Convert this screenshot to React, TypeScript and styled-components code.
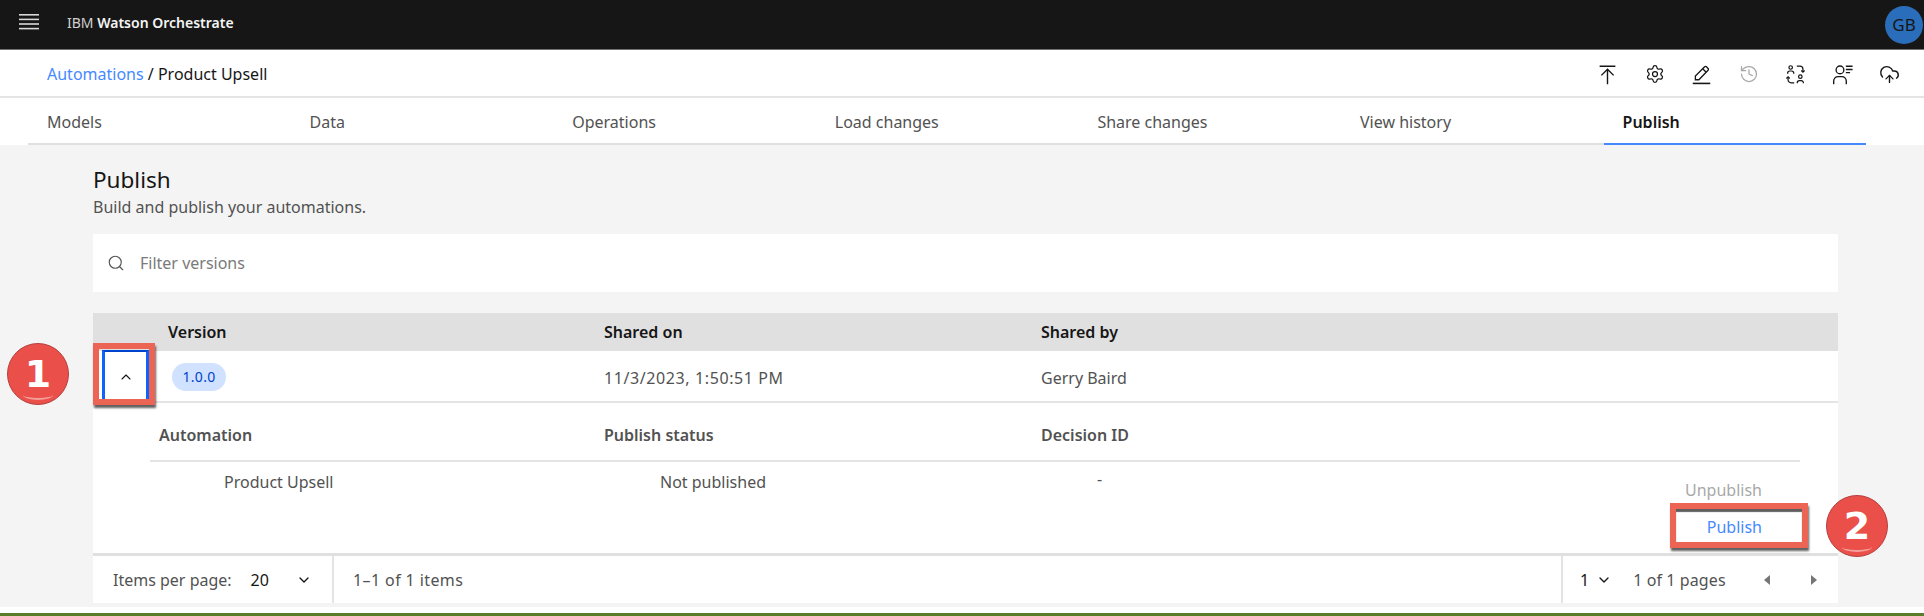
import React from 'react';
import styled, { createGlobalStyle } from 'styled-components';
import { ChevronDown, ChevronUp, CloudUpload, History, Search, Settings } from 'lucide-react';

const GlobalStyle = createGlobalStyle`
  html, body {
    margin: 0;
    padding: 0;
    background: #f4f4f4;
    overflow: hidden;
  }
  * { box-sizing: border-box; }
  body {
    font-family: 'Noto Sans', 'Liberation Sans', sans-serif;
    font-size: 16px;
    color: #161616;
  }
`;

const Page = styled.div`
  position: relative;
  width: 1924px;
  height: 616px;
  display: flex;
  flex-direction: column;
  overflow: hidden;
  border-bottom: 3px solid #5a7d2a;
`;

const TopBar = styled.header`
  height: 50px;
  flex: none;
  display: flex;
  align-items: center;
  background: #161616;
  border-bottom: 1px solid #6f6f6f;
  color: #f4f4f4;
  padding: 0 1px 5px 19px;
`;

const Brand = styled.div`
  margin-left: 28px;
  font-size: 14px;
  color: #d0d0d0;
  b { color: #f4f4f4; font-weight: 600; }
`;

const Avatar = styled.div`
  margin-left: auto;
  margin-top: 5px;
  width: 38px;
  height: 38px;
  border-radius: 50%;
  background: #2a6ebb;
  color: #161616;
  display: flex;
  align-items: center;
  justify-content: center;
  font-size: 17px;
`;

const Crumbs = styled.div`
  height: 48px;
  flex: none;
  background: #fff;
  border-bottom: 2px solid #e4e4e4;
  display: flex;
  align-items: center;
  padding: 2px 24px 0 47px;
`;

const CrumbText = styled.div`
  a { color: #4589ff; text-decoration: none; }
`;

const IconBar = styled.div`
  margin-left: auto;
  display: flex;
  gap: 26px;
`;

const ToolIcon = styled.span<{ $muted?: boolean }>`
  width: 21px;
  height: 21px;
  display: flex;
  align-items: center;
  justify-content: center;
  color: ${(p) => (p.$muted ? '#a8a8a8' : '#161616')};
`;

const Tabs = styled.nav`
  height: 47px;
  flex: none;
  background: #fff;
  display: flex;
  padding-left: 28px;
`;

const Tab = styled.div<{ $active?: boolean }>`
  width: 262.6px;
  padding: 13px 0 0 19px;
  color: ${(p) => (p.$active ? '#161616' : '#525252')};
  font-weight: ${(p) => (p.$active ? 600 : 400)};
  border-bottom: 2px solid ${(p) => (p.$active ? '#4589ff' : '#e0e0e0')};
`;

const Main = styled.main`
  flex: 1;
  padding: 22px 86px 0 93px;
`;

const Title = styled.h1`
  margin: 0;
  font-size: 22.5px;
  font-weight: 400;
  line-height: 26px;
`;

const Subtitle = styled.p`
  margin: 4px 0 0;
  line-height: 20px;
  color: #525252;
`;

const FilterBox = styled.div`
  margin-top: 17px;
  height: 58px;
  background: #fff;
  display: flex;
  align-items: center;
  gap: 15px;
  padding-left: 14px;
  color: #7a7a7a;
`;

const Table = styled.section`
  margin-top: 21px;
`;

const HeadRow = styled.div`
  height: 38px;
  display: grid;
  grid-template-columns: 75px 436px 437px 1fr;
  align-items: center;
  background: #e0e0e0;
  font-weight: 600;
`;

const VersionRow = styled.div`
  height: 52px;
  display: grid;
  grid-template-columns: 75px 436px 437px 1fr;
  align-items: center;
  background: #fff;
  border-bottom: 2px solid #e4e4e4;
  color: #525252;
`;

const VersionText = styled.span<{ $spacing?: number }>`
  padding-top: 2px;
  letter-spacing: ${(p) => p.$spacing ?? 0}px;
`;

const ExpandButton = styled.button`
  width: 47px;
  height: 52px;
  margin: -1px 0 0 9px;
  padding: 0;
  background: #fff;
  color: #161616;
  border: 0;
  border-top: 2px solid #0043ce;
  border-left: 3px solid #0f62fe;
  border-right: 3px solid #0f62fe;
  display: flex;
  align-items: center;
  justify-content: center;
`;

const Tag = styled.span`
  display: inline-flex;
  align-items: center;
  justify-content: center;
  width: 54px;
  height: 28px;
  margin-left: 4px;
  border-radius: 14px;
  background: #d0e2ff;
  color: #0043ce;
  font-size: 14px;
  letter-spacing: 0.3px;
`;

const Expanded = styled.div`
  height: 153px;
  background: #fff;
  padding: 0 38px 0 57px;
  border-bottom: 3px solid #e0e0e0;
`;

const SubHead = styled.div`
  height: 59px;
  display: grid;
  grid-template-columns: 454px 437px 1fr;
  align-items: center;
  border-bottom: 2px solid #e4e4e4;
  color: #525252;
  font-weight: 600;
  padding-top: 6px;
`;

const SubHeadCell = styled.div<{ $indent?: number }>`
  padding-left: ${(p) => p.$indent ?? 0}px;
`;

const SubBody = styled.div`
  display: grid;
  grid-template-columns: 454px 437px 200px 1fr;
  padding-top: 10px;
  color: #525252;
  line-height: 20px;
`;

const SubCell = styled.div<{ $indent: number }>`
  padding-left: ${(p) => p.$indent}px;
`;

const DashCell = styled(SubCell)`
  margin-top: -3px;
`;

const Actions = styled.div`
  display: flex;
  flex-direction: column;
  align-items: flex-end;
  gap: 17px;
  padding: 8px 38px 0 0;
`;

const ActionLink = styled.span<{ $disabled?: boolean }>`
  color: ${(p) => (p.$disabled ? '#a8a8a8' : '#4589ff')};
`;

const Pagination = styled.footer`
  height: 47px;
  background: #fff;
  display: flex;
  align-items: center;
  color: #525252;
`;

const PageGroup = styled.div<{ $width?: number; $divider?: 'left' | 'right'; $pad: number }>`
  height: 100%;
  display: flex;
  align-items: center;
  flex: ${(p) => (p.$width ? `0 0 ${p.$width}px` : '1')};
  ${(p) => (p.$divider ? `border-${p.$divider}: 2px solid #e4e4e4;` : '')}
  padding-left: ${(p) => p.$pad}px;
`;

const PageValue = styled.span<{ $gap: number }>`
  margin-left: ${(p) => p.$gap}px;
  display: inline-flex;
  align-items: center;
  color: #161616;
`;

const RangeText = styled.span`
  letter-spacing: 0.4px;
`;

const PagesText = styled.span`
  margin-left: 21px;
  letter-spacing: 0.1px;
`;

const Caret = styled.span<{ $dir: 'left' | 'right'; $gap: number }>`
  margin-left: ${(p) => p.$gap}px;
  width: 0;
  height: 0;
  border-top: 5px solid transparent;
  border-bottom: 5px solid transparent;
  ${(p) => (p.$dir === 'left' ? 'border-right: 6px solid #767676;' : 'border-left: 6px solid #767676;')}
`;

const BottomStrip = styled.div`
  height: 6px;
  flex: none;
  background: #fff;
`;

const Callout = styled.div<{ $x: number; $y: number; $w: number; $h: number; $inset?: boolean }>`
  position: absolute;
  left: ${(p) => p.$x}px;
  top: ${(p) => p.$y}px;
  width: ${(p) => p.$w}px;
  height: ${(p) => p.$h}px;
  border: 6px solid #ec6453;
  box-shadow: 1px 3px 2px rgba(30, 30, 30, 0.7)${(p) => (p.$inset ? ', inset 0 3px 1px rgba(40, 40, 40, 0.75)' : '')};
  pointer-events: none;
`;

const StepBadge = styled.div<{ $x: number; $y: number }>`
  position: absolute;
  left: ${(p) => p.$x}px;
  top: ${(p) => p.$y}px;
  width: 62px;
  height: 62px;
  border-radius: 50%;
  background: #ea5049;
  border: 1px solid #b5403f;
  color: #fff;
  display: flex;
  align-items: center;
  justify-content: center;
  font-family: 'DejaVu Sans', sans-serif;
  font-weight: 700;
  font-size: 38px;
  line-height: 1;
  &::after {
    content: '';
    position: absolute;
    left: 15px;
    right: 15px;
    bottom: 4px;
    height: 8px;
    border-bottom: 2px solid rgba(255, 255, 255, 0.45);
    border-radius: 50%;
  }
`;

const Menu = () => (
  <svg width="20" height="16" viewBox="0 0 20 16" fill="#d8d8d8">
    <rect y="0" width="20" height="1.6" />
    <rect y="4.6" width="20" height="1.6" />
    <rect y="9.2" width="20" height="1.6" />
    <rect y="13.8" width="20" height="1.6" />
  </svg>
);

const PublishTop = () => (
  <svg width="21" height="21" viewBox="0 0 24 24" fill="none" stroke="currentColor" strokeWidth="1.6">
    <path d="M3 2.5h18M12 23V6M5 13l7-7 7 7" />
  </svg>
);

const EditLine = () => (
  <svg width="21" height="21" viewBox="0 0 24 24" fill="none" stroke="currentColor" strokeWidth="1.5">
    <path d="M2 22.2h20" strokeWidth="1.8" />
    <path d="M5 18v-4.2L15.6 3.2a1.4 1.4 0 0 1 2 0l1.9 1.9a1.4 1.4 0 0 1 0 2L9 18z" />
    <path d="M13.4 5.5l3.9 3.9" />
  </svg>
);

const SwitchUsers = () => (
  <svg width="21" height="21" viewBox="0 0 24 24" fill="none" stroke="currentColor" strokeWidth="1.4">
    <circle cx="6.5" cy="4" r="2" />
    <path d="M3 11v-.5A2.5 2.5 0 0 1 5.5 8h2a2.5 2.5 0 0 1 2.5 2.5v.5" />
    <circle cx="17.5" cy="14.5" r="2" />
    <path d="M14 22v-.5a2.5 2.5 0 0 1 2.5-2.5h2a2.5 2.5 0 0 1 2.5 2.5v.5" />
    <path d="M13.5 2.5h3.5a3.5 3.5 0 0 1 3.5 3.5v3" />
    <path d="M18.6 7.4l1.9 1.9 1.9-1.9" />
    <path d="M10.5 21.5H7A3.5 3.5 0 0 1 3.5 18v-3" />
    <path d="M5.4 16.6l-1.9-1.9-1.9 1.9" />
  </svg>
);

const UserList = () => (
  <svg width="22" height="21" viewBox="0 0 25 24" fill="none" stroke="currentColor" strokeWidth="1.6">
    <circle cx="9.5" cy="6.5" r="4.6" />
    <path d="M2 23.5v-3.8a5.2 5.2 0 0 1 5.2-5.2h4.6a5.2 5.2 0 0 1 5.2 5.2v3.8" />
    <path d="M16.5 2.2h8M16.5 6h8M16.5 9.8h5" />
  </svg>
);

export default function App() {
  return (
    <Page>
      <GlobalStyle />
      <TopBar>
        <Menu />
        <Brand>
          IBM <b>Watson Orchestrate</b>
        </Brand>
        <Avatar>GB</Avatar>
      </TopBar>
      <Crumbs>
        <CrumbText>
          <a href="#automations">Automations</a> / Product Upsell
        </CrumbText>
        <IconBar>
          <ToolIcon><PublishTop /></ToolIcon>
          <ToolIcon><Settings size={20} strokeWidth={1.5} /></ToolIcon>
          <ToolIcon><EditLine /></ToolIcon>
          <ToolIcon $muted><History size={20} strokeWidth={1.5} /></ToolIcon>
          <ToolIcon><SwitchUsers /></ToolIcon>
          <ToolIcon><UserList /></ToolIcon>
          <ToolIcon><CloudUpload size={21} strokeWidth={1.6} /></ToolIcon>
        </IconBar>
      </Crumbs>
      <Tabs>
        <Tab>Models</Tab>
        <Tab>Data</Tab>
        <Tab>Operations</Tab>
        <Tab>Load changes</Tab>
        <Tab>Share changes</Tab>
        <Tab>View history</Tab>
        <Tab $active>Publish</Tab>
      </Tabs>
      <Main>
        <Title>Publish</Title>
        <Subtitle>Build and publish your automations.</Subtitle>
        <FilterBox>
          <Search size={18} strokeWidth={1.5} color="#525252" />
          Filter versions
        </FilterBox>
        <Table>
          <HeadRow>
            <span />
            <span>Version</span>
            <span>Shared on</span>
            <span>Shared by</span>
          </HeadRow>
          <VersionRow>
            <ExpandButton aria-label="Collapse row">
              <ChevronUp size={16} strokeWidth={1.6} />
            </ExpandButton>
            <div><Tag>1.0.0</Tag></div>
            <VersionText $spacing={0.6}>11/3/2023, 1:50:51 PM</VersionText>
            <VersionText>Gerry Baird</VersionText>
          </VersionRow>
          <Expanded>
            <SubHead>
              <SubHeadCell $indent={9}>Automation</SubHeadCell>
              <SubHeadCell>Publish status</SubHeadCell>
              <SubHeadCell>Decision ID</SubHeadCell>
            </SubHead>
            <SubBody>
              <SubCell $indent={74}>Product Upsell</SubCell>
              <SubCell $indent={56}>Not published</SubCell>
              <DashCell $indent={56}>-</DashCell>
              <Actions>
                <ActionLink $disabled>Unpublish</ActionLink>
                <ActionLink>Publish</ActionLink>
              </Actions>
            </SubBody>
          </Expanded>
          <Pagination>
            <PageGroup $width={241} $divider="right" $pad={20}>
              Items per page:
              <PageValue $gap={19}>20</PageValue>
              <PageValue $gap={27}><ChevronDown size={16} /></PageValue>
            </PageGroup>
            <PageGroup $pad={19}><RangeText>1–1 of 1 items</RangeText></PageGroup>
            <PageGroup $width={277} $divider="left" $pad={17}>
              <PageValue $gap={0}>1</PageValue>
              <PageValue $gap={7}><ChevronDown size={16} /></PageValue>
              <PagesText>1 of 1 pages</PagesText>
              <Caret $dir="left" $gap={38} />
              <Caret $dir="right" $gap={41} />
            </PageGroup>
          </Pagination>
        </Table>
      </Main>
      <BottomStrip />
      <Callout $x={93} $y={343} $w={62} $h={62} />
      <Callout $x={1670} $y={503} $w={138} $h={45} $inset />
      <StepBadge $x={7} $y={343}>1</StepBadge>
      <StepBadge $x={1826} $y={495}>2</StepBadge>
    </Page>
  );
}
